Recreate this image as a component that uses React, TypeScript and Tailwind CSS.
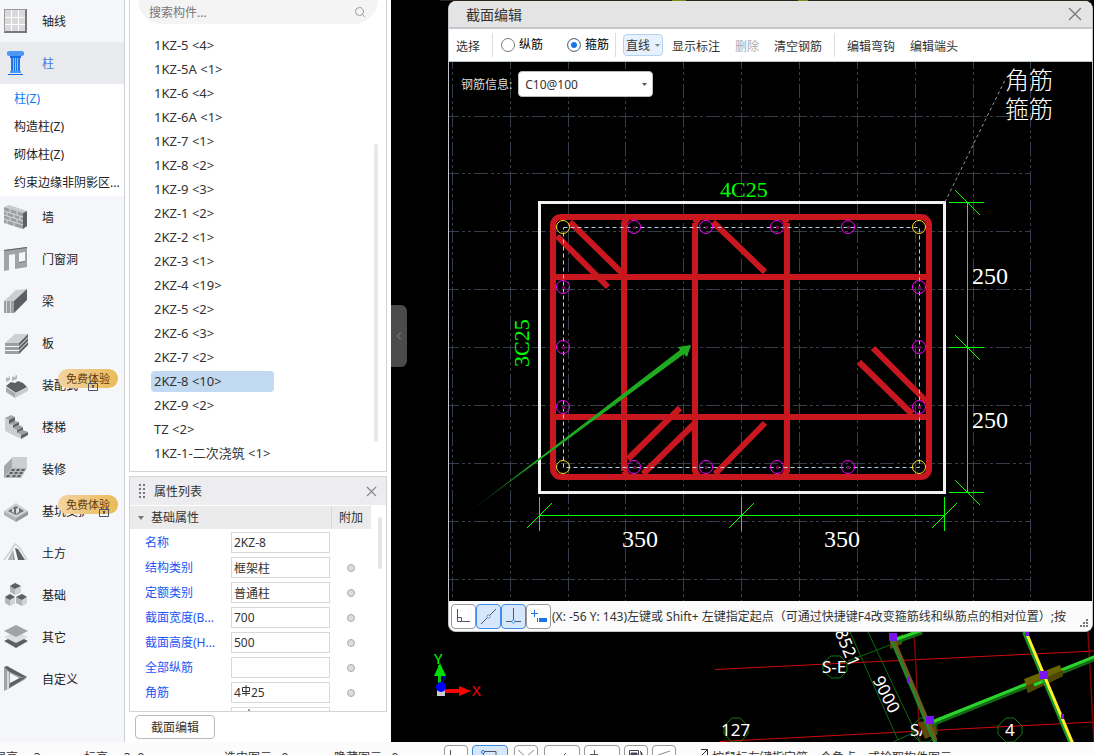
import { ReactNode } from "react";
import { Search, X, ChevronLeft } from "lucide-react";

type ModuleItem = {
  name: string;
  icon: ReactNode;
  badge?: boolean;
  lock?: string;
};

const gridIcon = (
  <>
    <rect x="0" y="0" width="23" height="24" fill="#77787c" />
    <rect x="1" y="1" width="20" height="21" fill="#d9d9da" />
    <path d="M7.500 1v21M14.500 1v21M1 8.500h20M1 15.500h20" stroke="#fff" />
    <path d="M.5 23V.5H22" stroke="#9a9b9e" fill="none" />
  </>
);

const columnIcon = (
  <>
    <path d="M5 0h13l2 1v3l-2 1H5L3 4V1z" fill="#4a9af5" />
    <path d="M6 5h11v2H6z" fill="#1769e0" />
    <path d="M7 7h9v13H7z" fill="#1f74ea" />
    <path d="M9.500 7v13M11.500 7v13M13.500 7v13" stroke="#8dc0ff" />
    <path d="M6 20h11v2H6z" fill="#4a9af5" />
    <path d="M4 23h15v1H4z" fill="#1769e0" />
  </>
);

const modules: ModuleItem[] = [
  {
    name: "墙",
    icon: (
      <>
        <path d="M0 2l5-2 18 6-4 2z" fill="#c9cacc" />
        <path d="M0 2l19 6v16L0 18z" fill="#9d9ea1" />
        <path d="M19 8l4-2v15l-4 3z" fill="#5d5f64" />
        <path
          d="M0 6l19 6M0 10l19 6M0 14l19 6M6 4v4M13 6v4M3 7v4M10 9v4M16 11v4M6 12v4M13 14v4M3 15v4M10 17v4"
          stroke="#d6d7d9"
          fill="none"
        />
      </>
    ),
  },
  {
    name: "门窗洞",
    icon: (
      <>
        <path d="M0 3l23-3v20l-12 2V7L5 8v15l-5 1zM15 6v10l6-1V5z" fill="#a2a3a6" fillRule="evenodd" />
        <path d="M0 3l23-3v1L0 4zM15 15l6-1v1l-6 1z" fill="#5d5f64" />
      </>
    ),
  },
  {
    name: "梁",
    icon: (
      <>
        <path d="M0 12L12 1l11-1-13 12z" fill="#cdced0" />
        <path d="M0 12h10v12H0z" fill="#9d9ea1" />
        <path d="M2.500 12v12M6.500 12v12" stroke="#d2d3d5" />
        <path d="M10 12L23 0v11L10 24z" fill="#5d5f64" />
      </>
    ),
  },
  {
    name: "板",
    icon: (
      <>
        <path d="M1 12L11 3h13l-9 9z" fill="#cfd0d2" />
        <path d="M1 12h14v3H1zM1 16h14v3H1zM1 20h14v3H1z" fill="#9d9ea1" />
        <path d="M15 12l9-9v3l-9 9zM15 16l9-9v3l-9 9zM15 20l9-9v3l-9 9z" fill="#5d5f64" />
      </>
    ),
  },
  {
    name: "装配式",
    badge: true,
    lock: "left-[88px]",
    icon: (
      <>
        <path d="M2 14l9 6v5l-9-6z" fill="#a9aaad" />
        <path d="M2 13l5-4 4 1 3-2 5 2 4 4-11 6z" fill="#5d5f64" />
        <path d="M11 20l13-6v4l-13 7z" fill="#c9cacc" />
        <path d="M2 5l4-2v4L2 9zM8 4l5-2v4L8 8z" fill="#b4b5b8" />
        <path d="M3 5l3-1M9 4l3-1" stroke="#e6e6e8" />
      </>
    ),
  },
  {
    name: "楼梯",
    icon: (
      <>
        <path d="M1 3v13l16 8v-4L7 9 5 3z" fill="#cdced0" />
        <path d="M1 3l6-3 4 2-6 3z" fill="#a6a7aa" />
        <path d="M5 5l6-3v4l-6 3zM9 10l6-3v3l-6 3zM13 15l6-3v3l-6 3zM17 20l7-3v3l-7 4z" fill="#5d5f64" />
        <path d="M5 9l6-3 4 1-6 3zM9 13l6-3 4 2-6 3zM13 17l6-2 5 2-7 3z" fill="#9d9ea1" />
      </>
    ),
  },
  {
    name: "装修",
    icon: (
      <>
        <path d="M0 9l8-8v10L0 21z" fill="#a6a7aa" />
        <path d="M8 0h15v11H8z" fill="#cdced0" />
        <path d="M0 21l8-10h15l-6 10z" fill="#b6b7ba" />
        <path
          d="M8 12h3l-1 2H7zM13 12h3l-1 2h-3zM18 12h3l-1 2h-3zM6 15h3l-1 2H5zM11 15h3l-1 2h-3zM16 15h3l-1 2h-3zM3 18h3l-1 2H2zM9 18h3l-1 2H8zM14 18h3l-1 2h-3z"
          fill="#5d5f64"
        />
      </>
    ),
  },
  {
    name: "基坑支护",
    badge: true,
    lock: "left-[99px]",
    icon: (
      <>
        <path d="M0 12l12-8 12 8-12 7z" fill="#cfd0d2" />
        <path d="M0 12l12 7v4L0 16z" fill="#b0b1b4" />
        <path d="M24 12l-12 7v4l12-7z" fill="#97989b" />
        <path d="M4 12l8-5 8 5-8 4z" fill="#6d6f74" />
        <path d="M8 13V9l2 1v4zM12 15v-5l3-2v5z" fill="#dadbdd" />
      </>
    ),
  },
  {
    name: "土方",
    icon: (
      <>
        <path d="M0 19L6 11l5-8 5 4 7 12" stroke="#cfd0d2" strokeWidth="1.500" fill="none" />
        <path d="M4 19l5-10 2 10z" fill="#97989b" />
        <path d="M11 7l3 1 7 11h-7z" fill="#5d5f64" />
        <path d="M5 19l4-10v10z" fill="#b5b6b8" />
      </>
    ),
  },
  {
    name: "基础",
    icon: (
      <>
        <path d="M6 3l5-3 6 3v6l-6 3-5-3zM1 14l5-3 5 3v6l-5 3-5-3zM12 14l6-3 5 3v6l-5 3-6-3z" fill="#b4b5b8" />
        <path d="M6 3l5-3 6 3-6 3zM1 14l5-3 5 3-5 3zM12 14l6-3 5 3-5 3z" fill="#5d5f64" />
        <path d="M11 6l6-3v6l-6 3zM6 17l5-3v6l-5 3zM18 17l5-3v6l-5 3z" fill="#d2d3d5" />
      </>
    ),
  },
  {
    name: "其它",
    icon: (
      <>
        <path d="M0 16l12-6 12 6-12 7z" fill="#5d5f64" />
        <path d="M0 12l12-6 12 6-12 6z" fill="#dedfe1" />
        <path d="M0 6l12-6 12 6-12 6z" fill="#a2a3a6" />
      </>
    ),
  },
  {
    name: "自定义",
    icon: (
      <>
        <path d="M0 0l23 10-3 3L4 22l-4 2zM6 6v11l9-6z" fill="#a2a3a6" fillRule="evenodd" />
        <path d="M0 0l3-1 20 11h-6L6 5z" fill="#5d5f64" />
        <path d="M6 16l10-5 7-1L5 21z" fill="#5d5f64" />
        <path d="M3 4l2 1v16l-2 2z" fill="#d6d7d9" />
      </>
    ),
  },
];

const subItems = ["柱(Z)", "构造柱(Z)", "砌体柱(Z)", "约束边缘非阴影区..."];

const members = [
  "1KZ-5 <4>",
  "1KZ-5A <1>",
  "1KZ-6 <4>",
  "1KZ-6A <1>",
  "1KZ-7 <1>",
  "1KZ-8 <2>",
  "1KZ-9 <3>",
  "2KZ-1 <2>",
  "2KZ-2 <1>",
  "2KZ-3 <1>",
  "2KZ-4 <19>",
  "2KZ-5 <2>",
  "2KZ-6 <3>",
  "2KZ-7 <2>",
  "2KZ-8 <10>",
  "2KZ-9 <2>",
  "TZ <2>",
  "1KZ-1-二次浇筑 <1>",
];

const properties = [
  { label: "名称", value: "2KZ-8", extra: false },
  { label: "结构类别", value: "框架柱", extra: true },
  { label: "定额类别", value: "普通柱", extra: true },
  { label: "截面宽度(B...", value: "700", extra: true },
  { label: "截面高度(H...", value: "500", extra: true },
  { label: "全部纵筋", value: "", extra: true },
];

function ModuleIcon({ children }: { children: ReactNode }) {
  return (
    <svg width="24" height="24" viewBox="0 0 24 24" className="shrink-0 overflow-visible" fill="none">
      {children}
    </svg>
  );
}

function RebarSymbol() {
  return (
    <svg width="10" height="11" viewBox="0 0 10 11" className="mb-1" fill="none" stroke="#333">
      <path d="M5 0v11M1.500 2.500h7v4h-7zM1 8.500h8" />
    </svg>
  );
}

function Sidebar() {
  return (
    <nav className="w-[125px] shrink-0 overflow-hidden border-r border-[#cfd0d3] bg-[#f5f6f9] text-[#222]">
      <button type="button" className="flex h-[42px] w-full items-center gap-[14px] pl-1">
        <ModuleIcon>{gridIcon}</ModuleIcon>
        <span className="pt-[2px]">轴线</span>
      </button>
      <button type="button" className="flex h-[42px] w-full items-center gap-[14px] bg-[#e9eaee] pl-1 text-[#3b7de0]">
        <ModuleIcon>{columnIcon}</ModuleIcon>
        <span className="pt-[2px]">柱</span>
      </button>
      <ul className="bg-white">
        {subItems.map((item, i) => (
          <li key={item} className="flex h-7 items-center pt-[2px]">
            <a href="#" className={i === 0 ? "pl-[14px] whitespace-nowrap text-[#0a7df5]" : "pl-[14px] whitespace-nowrap"}>
              {item}
            </a>
          </li>
        ))}
      </ul>
      {modules.map((m) => (
        <button key={m.name} type="button" className="relative flex h-[42px] w-full items-center gap-[14px] pl-1">
          <ModuleIcon>{m.icon}</ModuleIcon>
          <span className="pt-[2px]">{m.name}</span>
          {m.badge && (
            <span className="absolute top-[5px] left-[58px] flex h-[19px] w-[60px] items-center justify-center rounded-full bg-linear-to-r from-[#f3d3a0] to-[#eabb57] pt-[2px] text-[11px] text-[#5f3a10]">
              免费体验
            </span>
          )}
          {m.lock && (
            <svg width="10" height="11" viewBox="0 0 10 11" className={`absolute top-4 ${m.lock}`} fill="none" stroke="#4a5264">
              <path d="M.5 3.500h9v7h-9zM2.500 3V1M7.500 3V1M4 5.500h2L5 8z" />
            </svg>
          )}
        </button>
      ))}
    </nav>
  );
}

function MemberList() {
  return (
    <section className="relative h-[472px] shrink-0 border border-t-0 border-[#d4d4d6] bg-white">
      <label className="mx-2 flex h-6 items-center justify-between rounded-b-full bg-[#f4f4f4] pr-3 pl-[11px]">
        <input type="text" placeholder="搜索构件..." className="w-full bg-transparent pt-[2px] outline-none placeholder:text-[#777]" />
        <Search size={12} color="#999" strokeWidth={2} className="shrink-0" />
      </label>
      <ul className="pt-[9px]">
        {members.map((m) => (
          <li key={m} className="flex h-6 items-center pl-[21px]">
            <span
              className={
                m.startsWith("2KZ-8")
                  ? "w-[123px] rounded-sm bg-[#c2d9f2] pl-[3px] text-[13px] leading-[21px]"
                  : "pl-[3px] text-[13px] leading-[21px]"
              }
            >
              {m}
            </span>
          </li>
        ))}
      </ul>
      <div className="absolute top-36 right-2 h-[298px] w-1 rounded-full bg-[#e8e8e8]" />
    </section>
  );
}

function PropertyPanel() {
  return (
    <section className="relative mt-1 h-[236px] shrink-0 overflow-hidden border border-[#d4d4d6] bg-white">
      <header className="flex h-[29px] items-center border-b border-white bg-[#ededf0] pr-[6px] pl-[9px]">
        <svg width="6" height="14" viewBox="0 0 6 14" fill="#777">
          <path d="M0 0h2v2H0zM4 0h2v2H4zM0 4h2v2H0zM4 4h2v2H4zM0 8h2v2H0zM4 8h2v2H4zM0 12h2v2H0zM4 12h2v2H4z" />
        </svg>
        <h2 className="flex-1 pt-[2px] pl-[9px]">属性列表</h2>
        <button type="button" aria-label="关闭">
          <X size={17} color="#888" strokeWidth={1.500} />
        </button>
      </header>
      <div className="mr-[15px] flex h-[23px] items-center bg-[#ebebeb]">
        <span className="flex flex-1 items-center gap-[7px] pl-2">
          <svg width="6" height="4" viewBox="0 0 6 4" fill="#777">
            <path d="M0 0h6L3 4z" />
          </svg>
          基础属性
        </span>
        <span className="flex h-full w-10 items-center border-l border-[#d8d8d8] pl-[7px]">附加</span>
      </div>
      <div className="mr-4 pt-px">
        {properties.map((p) => (
          <div key={p.label} className="flex h-[25px] items-center">
            <label htmlFor={p.label} className="w-[101px] pl-[15px] text-[#1c55f5]">
              {p.label}
            </label>
            <input
              id={p.label}
              type="text"
              defaultValue={p.value}
              className="h-[21px] w-[99px] border border-[#d9d9d9] px-[2px] text-[#333] outline-none"
            />
            {p.extra && (
              <input
                type="checkbox"
                aria-label={`附加 ${p.label}`}
                className="ml-[17px] size-2 appearance-none rounded-full border border-[#a9abb0] bg-[#dcdcde]"
              />
            )}
          </div>
        ))}
        <div className="flex h-[25px] items-center">
          <span className="w-[101px] pl-[15px] text-[#1c55f5]">角筋</span>
          <button type="button" className="flex h-[21px] w-[99px] items-center border border-[#d9d9d9] px-[2px] text-[#333]">
            4<RebarSymbol />25
          </button>
          <input
            type="checkbox"
            aria-label="附加 角筋"
            className="ml-[17px] size-2 appearance-none rounded-full border border-[#a9abb0] bg-[#dcdcde]"
          />
        </div>
        <div className="mt-[2px] ml-[101px] flex h-[21px] w-[99px] border border-[#d9d9d9] pt-px pl-3">
          <RebarSymbol />
        </div>
      </div>
      <div className="absolute top-10 right-1 h-[52px] w-1 rounded-full bg-[#e6e6e6]" />
    </section>
  );
}

// column / beam plan that lies behind the editor window
function PlanView() {
  return (
    <svg className="absolute inset-0 size-full font-['Noto_Sans',sans-serif]" fill="none">
      <g transform="translate(-391 0)">
        <path d="M440 .5h650" stroke="#2c2418" />
        <path d="M672 .5h14M798 .5h10" stroke="#7c8a18" />
        <path d="M715 669.500L1094 651M720 741.500L1094 722" stroke="#d00a0a" />
        <path d="M914 632l6 110M1088 632l6 110" stroke="#7c0606" strokeWidth="1.500" />
        <path d="M850 632l48 108M868 632l52 110M848 661l42-16M893 742l24-11" stroke="#0c6a0c" />
        <g stroke="#0c7a0c">
          <path d="M831 656h9l7 7v8l-7 7h-9l-8-7v-8z" />
          <path d="M732 718h8l8 8v8l-8 8h-8l-8-8v-8z" />
          <path d="M920 718h9l8 8v8l-8 8h-9l-8-8v-8z" />
          <path d="M1006 718h8l8 8v8l-8 8h-8l-8-8v-8z" />
        </g>
        <g fill="#fff" fontSize="17">
          <text x="822" y="673">S-E</text>
          <text x="721" y="736">127</text>
          <text x="910" y="736">SA</text>
          <text x="1005" y="736">4</text>
          <text textAnchor="middle" transform="translate(842 650) rotate(67)">8521</text>
          <text textAnchor="middle" transform="translate(881 697) rotate(63)">9000</text>
        </g>
        <path d="M890 640l13-6-1 10-12 5zM918 722l17-2 2 14-12 5z" fill="#5c4a0a" />
        <path d="M897 641l25-9M932 724l164-66" stroke="#156b15" strokeWidth="5" />
        <path d="M897 639l25-9M932 722l164-66" stroke="#2bd42b" strokeWidth="3" />
        <path d="M892 640l44 104" stroke="#1f8a2c" strokeWidth="4" />
        <path d="M894 640l42 100" stroke="#6f5a1e" strokeWidth="3" />
        <path d="M1024 679l36-14 3 11-35 17z" fill="#6b6400" />
        <path d="M1026 686l37-16v6l-35 17z" fill="#4d4700" />
        <path d="M1034 685l12-5" stroke="#2bd42b" strokeWidth="3" />
        <path d="M1024 632l47 112" stroke="#1a9a2c" strokeWidth="4" />
        <path d="M1026 632l47 112" stroke="#fff12a" strokeWidth="3" />
        <path
          d="M889 633h8v8h-8zM926 716h8v8h-8zM1040 671h8v8h-8zM907 677h3v6h-3zM1025 632h4v4h-4zM1061 714h3v5h-3z"
          fill="#7a14f0"
        />
        {/* axis tripod */}
        <path d="M439.500 689v-24" stroke="#0c0" strokeWidth="3" />
        <path d="M434 676l6-13 6 13z" fill="#0d0" />
        <path d="M443 691h18" stroke="#f00" strokeWidth="4" />
        <path d="M459 686l12 5-12 5z" fill="#f00" />
        <path d="M437 690h8v6h-8z" fill="#ccc" />
        <circle cx="441" cy="687" r="5" fill="#00f" />
        <path d="M441 677h4l-3 6" stroke="#00f" />
        <text x="434" y="664" fontSize="15" fill="#0f0">Y</text>
        <text x="472" y="696" fontSize="15" fill="#f00">X</text>
      </g>
    </svg>
  );
}

const gridX = [452.500, 510.500, 568.500, 625.500, 683.500, 741.500, 799.500, 857.500, 915.500, 973.500, 1030.500];
const gridY = [116.500, 173.500, 231.500, 289.500, 347.500, 405.500, 463.500, 521.500, 579.500];
const cornerBars = [
  [563, 227],
  [919, 227],
  [563, 467],
  [919, 467],
];
const sideBars = [
  [634, 227],
  [706, 227],
  [777, 227],
  [848, 227],
  [634, 467],
  [706, 467],
  [777, 467],
  [848, 467],
  [563, 287],
  [563, 347],
  [563, 407],
  [919, 287],
  [919, 347],
  [919, 407],
];

function SectionDrawing() {
  return (
    <svg className="absolute inset-0 size-full" fill="none">
      <g transform="translate(-449 -62)">
        <g stroke="#343d49" strokeDasharray="14 3 3 3 3 3">
          {gridX.map((x) => (
            <path key={x} d={`M${x} 55V602`} />
          ))}
          {gridY.map((y) => (
            <path key={y} d={`M445 ${y}H1031`} />
          ))}
        </g>
        <rect x="539.500" y="202.500" width="405" height="290" stroke="#f2f2f2" strokeWidth="3" />
        {/* stirrups */}
        <g stroke="#c8171e" strokeWidth="6">
          <rect x="553" y="217" width="376" height="260" rx="8" />
          <path d="M556 277h370M556 417h370" />
          <path d="M624 471V223l4-6M695 223l4-6M624 471l4 6M695 223v248l4 6M787 223l-4-6M787 223v248l-4 6" />
          <path d="M570 222l53 52M557 236l51 51M713 222l52 50M628 459l52-51M643 474l52-51M715 474l50-51M873 348l54 54M859 362l53 52" />
        </g>
        <path d="M563.500 227.500h356v240h-356z" stroke="#b4cdea" strokeDasharray="4 3" />
        <g stroke="#ffe21e">
          {cornerBars.map(([x, y]) => (
            <circle key={`${x}-${y}`} cx={x} cy={y} r="6.500" />
          ))}
        </g>
        <g stroke="#f0f">
          {sideBars.map(([x, y]) => (
            <circle key={`${x}-${y}`} cx={x} cy={y} r="6.500" />
          ))}
        </g>
        <g fill="#6a0a50">
          {sideBars.map(([x, y]) => (
            <rect key={`${x}-${y}`} x={x - 1} y={y - 1} width="3" height="3" />
          ))}
        </g>
        {/* dimensions */}
        <g stroke="#0f0">
          <path d="M967.500 202v291M949 202.500h35M949 347.500h35M949 492.500h35" />
          <path d="M955 190l25 25M955 335l25 25M955 480l25 25" />
          <path d="M539 515.500h406M539.500 497v34M741.500 497v34M944.500 497v34" />
          <path d="M527 528l25-25M729 528l25-25M932 528l25-25" />
        </g>
        <path d="M945 202l61-124" stroke="#999" strokeDasharray="3 3" />
        <g className="font-['Liberation_Serif',serif]" fontSize="24" fill="#fff">
          <text x="972" y="284">250</text>
          <text x="972" y="428">250</text>
          <text x="622" y="547">350</text>
          <text x="824" y="547">350</text>
        </g>
        <g className="font-['Liberation_Serif',serif]" fontSize="22" fill="#0f0">
          <text x="720" y="197">4C25</text>
          <text transform="translate(529 367) rotate(-90)">3C25</text>
        </g>
        <g className="font-['Noto_Sans_CJK_SC',sans-serif]" fontSize="24" fontWeight="300" fill="#fff">
          <text x="1005" y="89">角筋</text>
          <text x="1005" y="118">箍筋</text>
        </g>
        <defs>
          <linearGradient id="arrow" x1="470" y1="511" x2="530" y2="466" gradientUnits="userSpaceOnUse">
            <stop offset="0" stopColor="#1faa1f" stopOpacity=".2" />
            <stop offset="1" stopColor="#1faa1f" />
          </linearGradient>
        </defs>
        <path d="M469 512L680 350l-2-3 13-2-4 12-3-3z" fill="url(#arrow)" />
      </g>
    </svg>
  );
}

function SectionEditor() {
  return (
    <div className="absolute top-px right-px bottom-[110px] left-[57px] flex flex-col overflow-hidden rounded-lg border-x border-b border-[#c3c6ca] bg-white">
      <header className="flex h-7 shrink-0 items-center justify-between border-b-2 border-[#c3c6ca] bg-[#e4e4e4] pr-[6px] pl-[17px] text-sm text-[#333]">
        <span className="pt-px">截面编辑</span>
        <button type="button" aria-label="关闭">
          <X size={22} color="#777" strokeWidth={1.500} />
        </button>
      </header>
      <div className="flex h-[33px] shrink-0 items-center border-b border-[#b9c4c4] pl-[7px] whitespace-nowrap text-[#333]">
        <button type="button" className="pt-[3px]">选择</button>
        <span className="ml-3 h-6 w-px bg-[#ddd]" />
        <label className="ml-2 flex items-center gap-1 text-black">
          <input type="radio" name="bar" className="size-[14px] appearance-none rounded-full border border-[#777]" />
          纵筋
        </label>
        <label className="ml-6 flex items-center gap-1 text-black">
          <input
            type="radio"
            name="bar"
            defaultChecked
            className="size-[14px] appearance-none rounded-full border border-[#777] bg-[#1b74e8] shadow-[inset_0_0_0_3px_white]"
          />
          箍筋
        </label>
        <span className="ml-[6px] h-6 w-px bg-[#ddd]" />
        <button
          type="button"
          className="ml-[7px] flex h-[22px] w-10 items-center gap-[5px] rounded-sm border border-[#b5d2f2] bg-[#e6f1fd] pl-[2px]"
        >
          <span className="pt-px">直线</span>
          <svg width="5" height="3" viewBox="0 0 5 3" fill="#888">
            <path d="M0 0h5L2.500 3z" />
          </svg>
        </button>
        <button type="button" className="ml-[9px] pt-[3px]">显示标注</button>
        <button type="button" disabled className="ml-[15px] pt-[3px] text-[#aaa]">删除</button>
        <button type="button" className="ml-[15px] pt-[3px]">清空钢筋</button>
        <span className="ml-3 h-6 w-px bg-[#ddd]" />
        <button type="button" className="ml-3 pt-[3px]">编辑弯钩</button>
        <button type="button" className="ml-[15px] pt-[3px]">编辑端头</button>
      </div>
      <div className="relative flex-1 bg-black">
        <SectionDrawing />
        <div className="absolute top-[9px] left-3 flex items-center gap-[6px]">
          <label htmlFor="rebar" className="pt-[2px] text-[#ddd]">钢筋信息:</label>
          <div className="relative">
            <select id="rebar" className="h-[26px] w-[135px] appearance-none rounded-sm border border-[#bbb] bg-white pt-px pl-[6px] text-[#333]">
              <option>C10@100</option>
            </select>
            <svg width="5" height="3" viewBox="0 0 5 3" fill="#555" className="absolute top-3 right-[6px]">
              <path d="M0 0h5L2.500 3z" />
            </svg>
          </div>
        </div>
      </div>
      <footer className="relative flex h-[30px] shrink-0 items-center overflow-hidden bg-[#fbfbfb] pr-[19px] pl-[2px] text-[#333]">
        <button type="button" aria-label="正交" className="flex size-[25px] shrink-0 items-center justify-center rounded-sm border border-[#999] bg-white">
          <svg width="15" height="14" viewBox="0 0 15 14" fill="none" stroke="#556">
            <path d="M1.500 0v12.500H14M1.500 8.500h4v4" />
          </svg>
        </button>
        <button type="button" aria-label="中点" className="flex size-[25px] shrink-0 items-center justify-center rounded-sm border border-[#3d8ce8] bg-[#d6e6fb]">
          <svg width="15" height="15" viewBox="0 0 15 15" fill="none" stroke="#556">
            <path d="M0 15L15 0" />
            <circle cx="7.500" cy="7.500" r="1.500" stroke="#3d8ce8" fill="#fff" />
          </svg>
        </button>
        <button type="button" aria-label="垂点" className="flex size-[25px] shrink-0 items-center justify-center rounded-sm border border-[#3d8ce8] bg-[#d6e6fb]">
          <svg width="15" height="16" viewBox="0 0 15 16" fill="none" stroke="#556">
            <path d="M7.500 0v14M0 13.500h15" />
            <circle cx="7.500" cy="13.500" r="1.500" stroke="#3d8ce8" fill="#fff" />
          </svg>
        </button>
        <button type="button" aria-label="动态输入" className="flex size-[25px] shrink-0 items-center justify-center rounded-sm border border-[#999] bg-white">
          <svg width="16" height="12" viewBox="0 0 16 12" fill="none" stroke="#1b6fe0">
            <path d="M0 3.500h7M3.500 0v7" />
            <path d="M8 8h8v4H8z" fill="#1b74e8" stroke="none" />
            <path d="M6.500 8v4" />
          </svg>
        </button>
        <p className="overflow-hidden pt-px pl-px whitespace-nowrap">
          (X: -56 Y: 143)左键或 Shift+ 左键指定起点（可通过快捷键F4改变箍筋线和纵筋点的相对位置）;按
        </p>
        <svg width="8" height="8" viewBox="0 0 8 8" fill="#777" className="absolute right-1 bottom-1">
          <path d="M6 0h2v2H6zM3 3h2v2H3zM6 3h2v2H6zM0 6h2v2H0zM3 6h2v2H3zM6 6h2v2H6z" />
        </svg>
      </footer>
    </div>
  );
}

const toolButton = "flex h-6 shrink-0 justify-center rounded-sm border border-[#999] bg-white pt-1";

function StatusBar() {
  return (
    <footer className="flex h-[13px] shrink-0 items-start overflow-hidden bg-[#fbfbfb] pt-[3px] whitespace-nowrap text-[#333]">
      <div className="flex w-[444px] shrink-0 pt-[5px]">
        <span className="-ml-[6px] w-[90px]">层高: &nbsp;&nbsp;&nbsp;3</span>
        <span className="w-[140px]">标高: &nbsp;&nbsp; 3~0</span>
        <span className="w-[110px]">选中图元: &nbsp;0</span>
        <span>隐藏图元: &nbsp;0</span>
      </div>
      <div className="flex gap-1">
        <button type="button" aria-label="正交" className={`${toolButton} w-6`}>
          <svg width="14" height="14" viewBox="0 0 14 14" fill="none" stroke="#556">
            <path d="M1.500 0v13.500H14" />
          </svg>
        </button>
        <button type="button" aria-label="捕捉" className="flex h-6 w-9 justify-center rounded-sm border border-[#3d8ce8] bg-[#d6e6fb] pt-1">
          <svg width="20" height="14" viewBox="0 0 20 14" fill="none" stroke="#556">
            <path d="M3 1.500h13v12M3.500 3v10" />
            <circle cx="3" cy="2" r="1.500" stroke="#1b74e8" fill="#fff" />
          </svg>
        </button>
        <button type="button" aria-label="交点" className={`${toolButton} ml-[2px] w-6`}>
          <svg width="16" height="14" viewBox="0 0 16 14" fill="none" stroke="#889">
            <path d="M0 0l16 14M16 0L0 14" />
          </svg>
        </button>
        <button type="button" aria-label="斜线" className={`${toolButton} ml-[2px] w-9`}>
          <svg width="14" height="14" viewBox="0 0 14 14" fill="none" stroke="#556">
            <path d="M11 3L0 14" />
          </svg>
        </button>
        <button type="button" aria-label="坐标" className={`${toolButton} w-9`}>
          <svg width="24" height="14" viewBox="0 0 24 14" fill="none" stroke="#556">
            <path d="M0 4.500h8M4.500 0v9" />
          </svg>
        </button>
        <button type="button" aria-label="显示" className={`${toolButton} w-6`}>
          <svg width="14" height="12" viewBox="0 0 14 12" fill="#445" stroke="#445">
            <path d="M.5.5h9v11h-9z" fill="none" />
            <path d="M2 3h6v6H2zM11 1l2 2v7" />
          </svg>
        </button>
        <button type="button" aria-label="测量" className={`${toolButton} w-6`}>
          <svg width="14" height="12" viewBox="0 0 14 12" fill="none" stroke="#889">
            <path d="M1 5l12-4M2 11l10-5" />
          </svg>
        </button>
      </div>
      <div className="flex items-start gap-1 pl-6">
        <svg width="8" height="12" viewBox="0 0 8 12" fill="none" stroke="#333">
          <path d="M1 4.500h6.500V11M7.500 4.500L0 12" />
        </svg>
        <span className="pt-[5px]">按鼠标左键指定第一个角点，或拾取构件图元</span>
      </div>
    </footer>
  );
}

export default function App() {
  return (
    <div className="flex h-screen flex-col overflow-hidden bg-white font-['Noto_Sans','Noto_Sans_CJK_SC',sans-serif] text-xs text-[#333]">
      <main className="flex min-h-0 flex-1">
        <Sidebar />
        <aside className="ml-1 flex w-[258px] shrink-0 flex-col">
          <MemberList />
          <PropertyPanel />
          <div className="pt-[3px] pl-[6px]">
            <button type="button" className="h-6 w-20 rounded-sm border border-[#bbb] bg-white pt-px">
              截面编辑
            </button>
          </div>
        </aside>
        <div className="relative ml-1 flex-1 overflow-hidden bg-black">
          <PlanView />
          <button
            type="button"
            aria-label="收起"
            className="absolute top-[305px] left-0 flex h-[62px] w-4 items-center justify-center rounded-r-md bg-[#4b4b4b]"
          >
            <ChevronLeft size={12} color="#aaa" strokeWidth={1.500} />
          </button>
          <SectionEditor />
        </div>
      </main>
      <StatusBar />
    </div>
  );
}
